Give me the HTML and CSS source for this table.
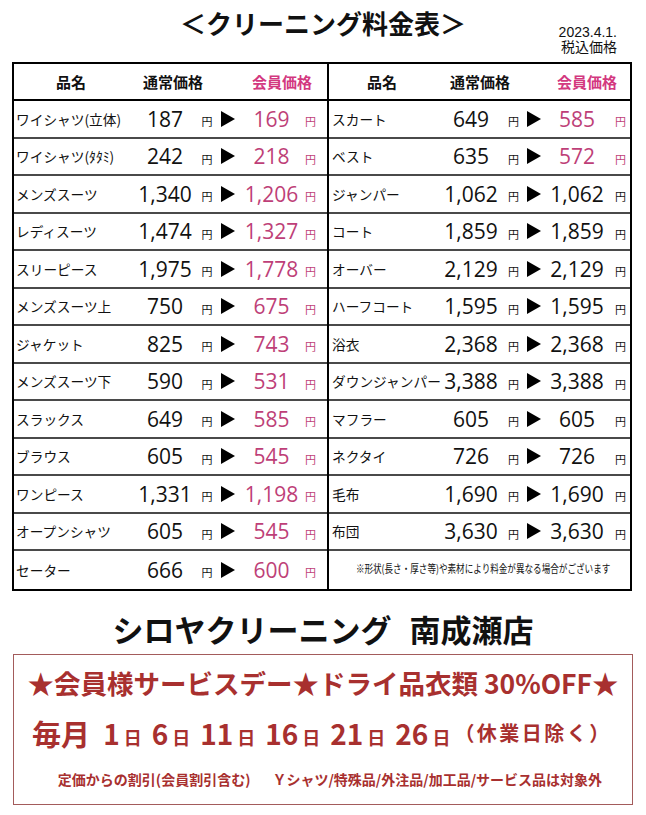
FILE: index.html
```html
<!DOCTYPE html>
<html lang="ja">
<head>
<meta charset="utf-8">
<title>クリーニング料金表</title>
<link rel="stylesheet" href="styles.css">
</head>
<body>
<div class="top">
  <h1 class="title">＜クリーニング料金表＞</h1>
  <div class="date">2023.4.1.<br>税込価格</div>
</div>

<div class="table">
  <div class="half left">
    <div class="head"><span>品名</span><span>通常価格</span><span class="mem">会員価格</span></div>
    <div class="row"><span class="nm">ワイシャツ(立体)</span><span class="n">187</span><span class="y">円</span><i class="tri"></i><span class="n pk">169</span><span class="y pk">円</span></div>
    <div class="row"><span class="nm">ワイシャツ(ﾀﾀﾐ)</span><span class="n">242</span><span class="y">円</span><i class="tri"></i><span class="n pk">218</span><span class="y pk">円</span></div>
    <div class="row"><span class="nm">メンズスーツ</span><span class="n">1,340</span><span class="y">円</span><i class="tri"></i><span class="n pk">1,206</span><span class="y pk">円</span></div>
    <div class="row"><span class="nm">レディスーツ</span><span class="n">1,474</span><span class="y">円</span><i class="tri"></i><span class="n pk">1,327</span><span class="y pk">円</span></div>
    <div class="row"><span class="nm">スリーピース</span><span class="n">1,975</span><span class="y">円</span><i class="tri"></i><span class="n pk">1,778</span><span class="y pk">円</span></div>
    <div class="row"><span class="nm">メンズスーツ上</span><span class="n">750</span><span class="y">円</span><i class="tri"></i><span class="n pk">675</span><span class="y pk">円</span></div>
    <div class="row"><span class="nm">ジャケット</span><span class="n">825</span><span class="y">円</span><i class="tri"></i><span class="n pk">743</span><span class="y pk">円</span></div>
    <div class="row"><span class="nm">メンズスーツ下</span><span class="n">590</span><span class="y">円</span><i class="tri"></i><span class="n pk">531</span><span class="y pk">円</span></div>
    <div class="row"><span class="nm">スラックス</span><span class="n">649</span><span class="y">円</span><i class="tri"></i><span class="n pk">585</span><span class="y pk">円</span></div>
    <div class="row"><span class="nm">ブラウス</span><span class="n">605</span><span class="y">円</span><i class="tri"></i><span class="n pk">545</span><span class="y pk">円</span></div>
    <div class="row"><span class="nm">ワンピース</span><span class="n">1,331</span><span class="y">円</span><i class="tri"></i><span class="n pk">1,198</span><span class="y pk">円</span></div>
    <div class="row"><span class="nm">オープンシャツ</span><span class="n">605</span><span class="y">円</span><i class="tri"></i><span class="n pk">545</span><span class="y pk">円</span></div>
    <div class="row"><span class="nm">セーター</span><span class="n">666</span><span class="y">円</span><i class="tri"></i><span class="n pk">600</span><span class="y pk">円</span></div>
  </div>
  <div class="half right">
    <div class="head"><span>品名</span><span>通常価格</span><span class="mem">会員価格</span></div>
    <div class="row"><span class="nm">スカート</span><span class="n">649</span><span class="y">円</span><i class="tri"></i><span class="n pk">585</span><span class="y pk">円</span></div>
    <div class="row"><span class="nm">ベスト</span><span class="n">635</span><span class="y">円</span><i class="tri"></i><span class="n pk">572</span><span class="y pk">円</span></div>
    <div class="row"><span class="nm">ジャンパー</span><span class="n">1,062</span><span class="y">円</span><i class="tri"></i><span class="n">1,062</span><span class="y">円</span></div>
    <div class="row"><span class="nm">コート</span><span class="n">1,859</span><span class="y">円</span><i class="tri"></i><span class="n">1,859</span><span class="y">円</span></div>
    <div class="row"><span class="nm">オーバー</span><span class="n">2,129</span><span class="y">円</span><i class="tri"></i><span class="n">2,129</span><span class="y">円</span></div>
    <div class="row"><span class="nm">ハーフコート</span><span class="n">1,595</span><span class="y">円</span><i class="tri"></i><span class="n">1,595</span><span class="y">円</span></div>
    <div class="row"><span class="nm">浴衣</span><span class="n">2,368</span><span class="y">円</span><i class="tri"></i><span class="n">2,368</span><span class="y">円</span></div>
    <div class="row"><span class="nm">ダウンジャンパー</span><span class="n">3,388</span><span class="y">円</span><i class="tri"></i><span class="n">3,388</span><span class="y">円</span></div>
    <div class="row"><span class="nm">マフラー</span><span class="n">605</span><span class="y">円</span><i class="tri"></i><span class="n">605</span><span class="y">円</span></div>
    <div class="row"><span class="nm">ネクタイ</span><span class="n">726</span><span class="y">円</span><i class="tri"></i><span class="n">726</span><span class="y">円</span></div>
    <div class="row"><span class="nm">毛布</span><span class="n">1,690</span><span class="y">円</span><i class="tri"></i><span class="n">1,690</span><span class="y">円</span></div>
    <div class="row"><span class="nm">布団</span><span class="n">3,630</span><span class="y">円</span><i class="tri"></i><span class="n">3,630</span><span class="y">円</span></div>
    <div class="row note-row"><p class="note"><span>※形状(長さ・厚さ等)や素材により料金が異なる場合がございます</span></p></div>
  </div>
</div>

<p class="store">シロヤクリーニング<span class="gap"></span>南成瀬店</p>

<div class="banner">
  <p class="b1">★会員様サービスデー★ドライ品衣類 30%OFF★</p>
  <p class="b2"><span class="mo">毎月</span><span>1<small>日</small></span><span>6<small>日</small></span><span>11<small>日</small></span><span>16<small>日</small></span><span>21<small>日</small></span><span>26<small>日</small></span><small class="off">（休業日除く）</small></p>
  <p class="b3">定価からの割引(会員割引含む)<span class="sp"></span>Ｙシャツ/特殊品/外注品/加工品/サービス品は対象外</p>
</div>
</body>
</html>
```
FILE: styles.css
```css
* {
  box-sizing: border-box;
  margin: 0;
  padding: 0;
}

body {
  width: 646px;
  height: 815px;
  overflow: hidden;
  background: #fff;
  color: #111;
  font-family: "Noto Sans CJK JP", "Noto Sans", sans-serif;
}

/* header */
.top {
  display: grid;
  grid-template-columns: 1fr auto 1fr;
  height: 62px;
}

.title {
  grid-column: 2;
  font-size: 26px;
  font-weight: 700;
  line-height: 28px;
  padding-top: 9px;
}

.date {
  justify-self: end;
  padding: 25px 29px 0 0;
  font-family: "Liberation Sans", "Noto Sans CJK JP", sans-serif;
  font-size: 14px;
  line-height: 15px;
  text-align: right;
}

/* price table */
.table {
  margin: 0 12px;
  width: 620px;
  border: 2px solid #000;
  display: grid;
  grid-template-columns: 313px 303px;
}

.half {
  display: flex;
  flex-direction: column;
}

.right {
  border-left: 2px solid #000;
}

.head {
  height: 37px;
  border-bottom: 2px solid #000;
  display: grid;
  align-items: center;
  font-size: 15px;
  font-weight: 700;
}

.left .head {
  grid-template-columns: 114px 90px 32px 64px 13px;
}

.right .head {
  grid-template-columns: 106px 90px 30px 64px 11px;
}

.head span {
  text-align: center;
}

.head .mem {
  grid-column: 4;
  color: #d3387f;
}

.row {
  height: 37.5px;
  display: grid;
  align-items: center;
  border-bottom: 2px solid #4a4a4a;
}

.row:last-child {
  border-bottom: 0;
}

.left .row {
  grid-template-columns: 116px 70px 14px 28px 59px 19px 7px;
}

.right .row {
  grid-template-columns: 111px 62px 23px 18px 68px 19px;
}

.nm {
  font-size: 13.7px;
  white-space: nowrap;
  padding-left: 2px;
}

.right .nm {
  padding-left: 3px;
}

.n {
  font-family: "Open Sans", "Liberation Sans", sans-serif;
  font-size: 21px;
  text-align: center;
  white-space: nowrap;
}

.y {
  font-size: 11px;
  text-align: center;
  padding-top: 5px;
}

.tri {
  justify-self: center;
  width: 0;
  height: 0;
  border-left: 14px solid #000;
  border-top: 8px solid transparent;
  border-bottom: 8px solid transparent;
}

.pk {
  color: #be3f78;
}

.note-row {
  display: block;
  padding-top: 9px;
}

.note {
  text-align: center;
  white-space: nowrap;
  font-size: 11px;
  line-height: 16px;
  padding-left: 8px;
}

.note span {
  display: inline-block;
  margin: 0 -40px;
  transform: scaleX(0.78);
}

/* store name */
.store {
  text-align: center;
  font-size: 31px;
  font-weight: 700;
  line-height: 38px;
  padding: 19px 0 6px;
  white-space: nowrap;
}

.gap {
  display: inline-block;
  width: 18px;
}

/* banner */
.banner {
  margin: 0 13px;
  width: 620px;
  height: 151px;
  border: 1.5px solid #a35b5b;
  display: grid;
  grid-template-rows: 56px 44px 1fr;
  color: #a8302f;
  font-weight: 700;
}

.b1 {
  display: flex;
  align-items: center;
  justify-content: center;
  font-size: 26.5px;
  white-space: nowrap;
}

.b2 {
  display: flex;
  align-items: center;
  justify-content: center;
  gap: 10px;
  font-size: 28px;
  white-space: nowrap;
  padding-right: 2px;
}

.b2 .mo {
  font-size: 29px;
  margin-right: 3px;
}

.b2 small {
  font-size: 18px;
  margin-left: 4px;
}

.b2 .off {
  margin-left: -6px;
  font-size: 20px;
  letter-spacing: 2.5px;
}

.b3 {
  display: flex;
  align-items: center;
  justify-content: center;
  font-size: 14px;
  white-space: nowrap;
  padding-left: 14px;
}

.sp {
  display: inline-block;
  width: 22px;
}
```
